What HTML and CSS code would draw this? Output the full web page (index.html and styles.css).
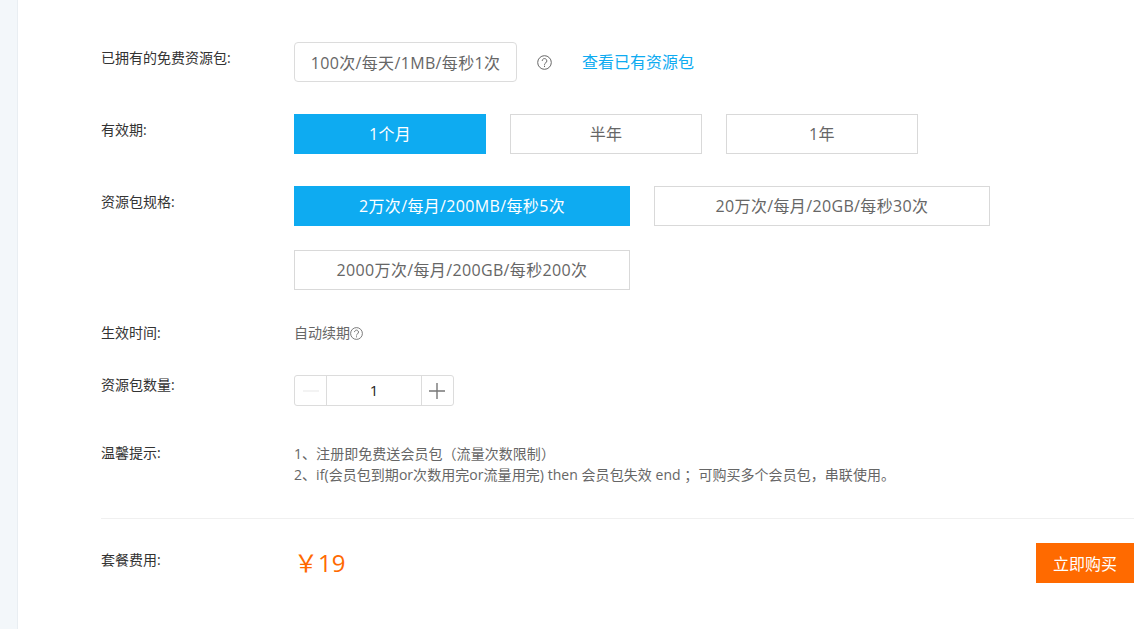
FILE: index.html
```html
<!DOCTYPE html>
<html lang="zh">
<head>
<meta charset="utf-8">
<title>资源包</title>
<link rel="stylesheet" href="styles.css">
</head>
<body>
<div class="page">
  <aside class="side"></aside>
  <main class="main">
    <div class="row r-free">
      <div class="label">已拥有的免费资源包:</div>
      <div class="field inline">
        <span class="free-box">100次/每天/1MB/每秒1次</span>
        <svg class="help help-a" viewBox="0 0 15 15"><circle cx="7.5" cy="7.5" r="6.8" /><path d="M5.2 5.9a2.3 2.3 0 1 1 3.6 1.9c-.9.6-1.3 1.1-1.3 2" /><path d="M7.5 10.7v1.3" /></svg>
        <a class="link">查看已有资源包</a>
      </div>
    </div>
    <div class="row r-term">
      <div class="label">有效期:</div>
      <div class="field opts">
        <span class="opt w192 on">1个月</span>
        <span class="opt w192">半年</span>
        <span class="opt w192">1年</span>
      </div>
    </div>
    <div class="row r-spec">
      <div class="label">资源包规格:</div>
      <div class="field opts">
        <span class="opt w336 on">2万次/每月/200MB/每秒5次</span>
        <span class="opt w336">20万次/每月/20GB/每秒30次</span>
        <span class="opt w336">2000万次/每月/200GB/每秒200次</span>
      </div>
    </div>
    <div class="row r-time">
      <div class="label">生效时间:</div>
      <div class="field small inline">自动续期<svg class="help help-b" viewBox="0 0 15 15"><circle cx="7.5" cy="7.5" r="6.8" /><path d="M5.2 5.9a2.3 2.3 0 1 1 3.6 1.9c-.9.6-1.3 1.1-1.3 2" /><path d="M7.5 10.7v1.3" /></svg></div>
    </div>
    <div class="row r-qty">
      <div class="label">资源包数量:</div>
      <div class="field">
        <div class="stepper">
          <span class="step minus"><svg viewBox="0 0 16 16"><path d="M0 8h16" /></svg></span>
          <span class="qty">1</span>
          <span class="step plus"><svg viewBox="0 0 16 16"><path d="M0 8h16M8 0v16" /></svg></span>
        </div>
      </div>
    </div>
    <div class="row r-tips">
      <div class="label">温馨提示:</div>
      <div class="field small tips">
        <p>1、注册即免费送会员包（流量次数限制）</p>
        <p>2、if(会员包到期or次数用完or流量用完) then 会员包失效 end ；可购买多个会员包，串联使用。</p>
      </div>
    </div>
    <div class="row r-total">
      <div class="label">套餐费用:</div>
      <div class="price">￥19</div>
      <button class="buy" type="button">立即购买</button>
    </div>
  </main>
</div>
</body>
</html>
```

FILE: styles.css
```css
* { box-sizing: border-box; }
html, body { margin: 0; height: 100%; overflow: hidden; background: #fff; }
body {
  font-family: "Open Sans", "Noto Sans CJK SC", sans-serif;
  font-size: 14px;
  color: #333;
  text-spacing-trim: space-all;
}
.page { display: flex; height: 629px; }
.side { width: 18px; flex: none; background: #f3f7fa; border-right: 1px solid #e9eef2; }
.main { width: 1116px; flex: none; padding: 42px 0 0 83px; }
.row { display: flex; align-items: flex-start; }
.label { width: 193px; flex: none; font-size: 14px; line-height: 20px; color: #333; padding-top: 6px; white-space: nowrap; }
.field { flex: 1; min-width: 0; }
.inline { display: flex; align-items: center; }
.free-box {
  height: 40px; width: 223px; border: 1px solid #dcdcdc; border-radius: 4px;
  display: flex; align-items: center; justify-content: center;
  font-size: 16px; color: #666; white-space: nowrap; letter-spacing: .35px;
}
.help { fill: none; stroke: #666; stroke-width: 1; flex: none; }
.help-a { width: 15px; height: 15px; margin: 0 30px 0 20px; }
.help-b { width: 13px; height: 13px; }
.link { font-size: 16px; color: #0eabf1; line-height: 40px; white-space: nowrap; }
.opts { display: flex; flex-wrap: wrap; gap: 24px; }
.opt {
  height: 40px; border: 1px solid #d9d9d9; display: flex; align-items: center; justify-content: center;
  font-size: 16px; color: #666; white-space: nowrap; letter-spacing: .35px; padding-bottom: 2px;
}
.opt.on { background: #0eabf1; border-color: #0eabf1; color: #fff; }
.w192 { width: 192px; }
.w336 { width: 336px; }
.r-term, .r-spec { margin-top: 32px; }
.r-time { margin-top: 33px; }
.r-time .label, .r-qty .label, .r-tips .label { padding-top: 0; }
.small { font-size: 14px; color: #666; line-height: 20px; }
.r-qty { margin-top: 32px; }
.stepper { display: flex; width: 160px; height: 31px; border: 1px solid #dcdcdc; border-radius: 3px; }
.step { width: 31px; flex: none; display: flex; align-items: center; justify-content: center; }
.step svg { width: 16px; height: 16px; fill: none; stroke-width: 1.4; }
.minus svg { stroke: #eeeeee; }
.plus { padding-right: 1px; }
.plus svg { stroke: #777; }
.qty { flex: 1; border-left: 1px solid #dcdcdc; border-right: 1px solid #dcdcdc; text-align: center; line-height: 29px; font-size: 15px; color: #222; }
.r-tips { margin-top: 37px; border-bottom: 1px solid #f0f0f0; height: 76px; }
.tips p { margin: 0; line-height: 21px; white-space: nowrap; letter-spacing: .05px; }
.r-total { margin-top: 24px; }
.r-total .label { padding-top: 7px; }
.price { flex: 1; font-size: 24px; line-height: 40px; color: #ff6a00; }
.buy {
  width: 98px; height: 40px; border: 0; background: #ff6a00; color: #fff;
  font: inherit; font-size: 16px; padding: 0;
}
```
